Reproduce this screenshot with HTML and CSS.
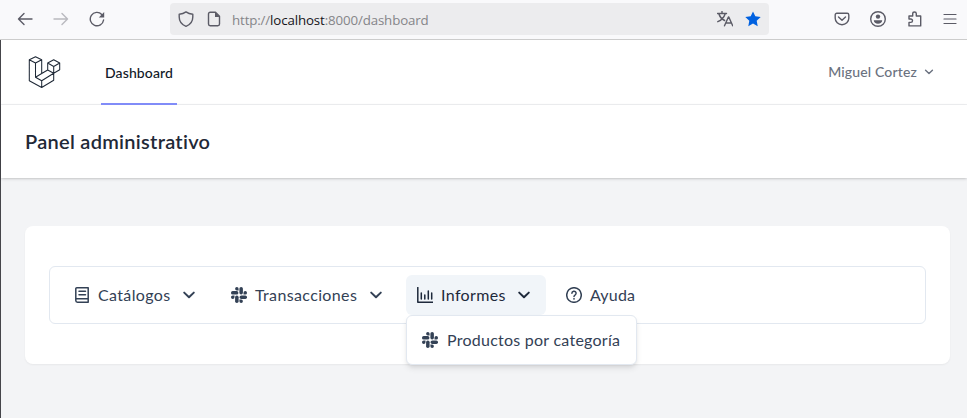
FILE: index.html
```html
<!DOCTYPE html>
<html lang="es">
<head>
<meta charset="utf-8">
<title>Panel administrativo</title>
<link rel="stylesheet" href="styles.css">
</head>
<body>
<svg class="defs" aria-hidden="true">
  <symbol id="slack" viewBox="0 0 16 16">
    <rect x="0" y="4.100" width="7.400" height="3.500" rx="1.700"/>
    <rect x="8.400" y="0" width="3.500" height="7.400" rx="1.700"/>
    <rect x="8.600" y="8.400" width="7.400" height="3.500" rx="1.700"/>
    <rect x="4.100" y="8.600" width="3.500" height="7.400" rx="1.700"/>
    <path d="M7.600 3.500H5.900A1.750 1.750 0 1 1 7.600 1.700zM12.500 7.600V5.900A1.750 1.750 0 1 1 14.300 7.600zM8.400 12.500h1.700a1.750 1.750 0 1 1-1.700 1.800zM3.500 8.400v1.700A1.750 1.750 0 1 1 1.700 8.400z"/>
  </symbol>
  <symbol id="chevron" viewBox="0 0 14 14">
    <path d="M2.200 4.600 7 9.200l4.800-4.600" fill="none" stroke="currentColor" stroke-width="2" stroke-linecap="round" stroke-linejoin="round"/>
  </symbol>
</svg>
<div class="toolbar">
  <div class="controls">
    <svg class="ico" viewBox="0 0 16 16"><path d="M15 8H1.500M7 2.600 1.500 8 7 13.400"/></svg>
    <svg class="ico disabled" viewBox="0 0 16 16"><path d="M1 8h13.500M9 2.600 14.500 8 9 13.400"/></svg>
    <svg class="ico" viewBox="0 0 16 16"><path d="M14.600 9A6.700 6.700 0 1 1 12.800 3.400"/><path class="solid" d="M15.200 1v5.400H9.800z"/></svg>
  </div>
  <div class="address">
    <svg class="ico" viewBox="0 0 16 16"><path d="M8 .9C6 2.400 3.700 3.100 1.200 3.200V6c0 4.500 2.700 7.700 6.800 9.300 4.100-1.600 6.800-4.800 6.800-9.300V3.200C12.300 3.100 10 2.400 8 .9z"/></svg>
    <svg class="ico page" viewBox="0 0 16 16"><path d="M9.500 1.200H4.200A1.700 1.700 0 0 0 2.500 2.900v10.200a1.700 1.700 0 0 0 1.700 1.700h7.600a1.700 1.700 0 0 0 1.700-1.700V5.200z"/><path class="solid" d="M9 1v5h4.500z"/></svg>
    <span class="url">http://<b>localhost</b>:8000/dashboard</span>
    <svg class="ico translate" viewBox="0 0 16 16"><path d="M.5 2.500h9M5 .5v2M2 3.200c1 3 3 5 5.600 6.300M8 3.200C7 6.400 4.500 9 .8 10.700"/><path d="M7.500 14.800 11.400 6h.4l3.900 8.800M9 12h5.300"/></svg>
    <svg class="star" viewBox="0 0 16 16"><path d="m8 .4 2.300 4.900 5.400.7-4 3.700 1 5.500L8 12.600l-4.700 2.600 1-5.500-4-3.700 5.400-.7z"/></svg>
  </div>
  <div class="actions">
    <svg class="ico" viewBox="0 0 16 16"><path d="M2.800 2.300h10.400a1.600 1.600 0 0 1 1.600 1.600v3.300a6.800 6.500 0 0 1-13.600 0V3.900a1.600 1.600 0 0 1 1.600-1.600zM4.500 6 8 9.300 11.500 6"/></svg>
    <svg class="ico" viewBox="0 0 16 16"><circle cx="8" cy="8" r="7.300"/><circle class="solid" cx="8" cy="5.600" r="2.200"/><path class="solid" d="M3.800 9.300h8.400c0 2.200-1.800 3.500-4.200 3.500s-4.200-1.300-4.200-3.500z"/></svg>
    <svg class="ico ext" viewBox="0 0 16 16"><path d="M2 8V5h3.700V2.800a1.800 1.800 0 0 1 3.600 0V5h4.400v9.900H2v-3.500h1.800a1.700 1.700 0 0 0 0-3.400z"/></svg>
    <svg class="ico menu" viewBox="0 0 16 16"><path d="M2 3.500h12M2 8h12M2 12.500h12"/></svg>
  </div>
</div>
<div class="viewport">
  <nav class="topnav">
    <svg class="logo" viewBox="0 0 33 33"><path d="M1.300 3.800 7.500.8l6.200 3v13.700l6-3.500V7l6-3.200 6 3.200v6.800l-6 3.500v7l-12 7.200L1.300 24.700zM1.300 3.800l6.200 3.200 6.200-3.200M7.500 7v14.200l6.200-3.700M7.500 21.200l6.200 3.600 12-7.500M13.700 24.800v6.700M19.700 14l6 3.300M19.700 7l6 3.500 6-3.500M25.700 10.500v6.800"/></svg>
    <a class="tab"><span>Dashboard</span></a>
    <div class="user"><span>Miguel Cortez</span><svg viewBox="0 0 14 14"><use href="#chevron"/></svg></div>
  </nav>
  <header class="heading"><h1>Panel administrativo</h1></header>
  <main>
    <section class="card">
      <div class="menubar">
        <div class="item catalogs">
          <svg class="mi" viewBox="0 0 16 16"><path class="line" d="M2.800.8h11.400v14.400H3.500A1.700 1.700 0 0 1 1.800 13.500V1.800a1 1 0 0 1 1-1zM2 11.700h12.200M5 4.300h6.500M5 7.700h6.500"/></svg>
          <span>Catálogos</span><svg class="chev"><use href="#chevron"/></svg>
        </div>
        <div class="item transactions">
          <svg class="mi"><use href="#slack"/></svg>
          <span>Transacciones</span><svg class="chev"><use href="#chevron"/></svg>
        </div>
        <div class="item reports active">
          <svg class="mi" viewBox="0 0 16 16"><path class="line" d="M.8.500v14.700h15.200M4.300 6v6M7.800 8v4M11.300 4v8M14.700 6v6"/></svg>
          <span>Informes</span><svg class="chev"><use href="#chevron"/></svg>
          <div class="submenu">
            <svg class="mi"><use href="#slack"/></svg><span>Productos por categoría</span>
          </div>
        </div>
        <div class="item help">
          <svg class="mi" viewBox="0 0 16 16"><circle class="line" cx="8" cy="8" r="7.300"/><path class="line" d="M5.900 6.300A2.100 2.100 0 1 1 9 8.100c-.7.400-1 .7-1 1.500"/><circle cx="8" cy="11.800" r=".9"/></svg>
          <span>Ayuda</span>
        </div>
      </div>
    </section>
  </main>
</div>
</body>
</html>
```
FILE: styles.css
```css
* { box-sizing: border-box; }
body { margin: 0; height: 418px; overflow: hidden; background: #f3f4f6; font-family: Lato, "Liberation Sans", sans-serif; }
svg { display: block; flex: none; }
.defs { display: none; }
.toolbar { display: flex; align-items: center; height: 40px; padding: 0 9px 2px 17px; background: #f9f9fb; border-bottom: 1px solid #ccc; }
.controls { display: flex; gap: 20px; width: 153px; }
.ico { width: 16px; height: 16px; fill: none; stroke: #5b5b66; stroke-width: 1.4; stroke-linecap: round; stroke-linejoin: round; }
.ico .solid { fill: #5b5b66; stroke: none; }
.menu { stroke-width: 1.2; }
.disabled { opacity: .4; }
.address { display: flex; align-items: center; width: 599px; height: 32px; padding: 0 8px; border-radius: 4px; background: #ececee; }
.page { margin-left: 12px; }
.url { flex: 1; margin-left: 10px; padding-top: 2px; color: #858589; font: 13.3px "Open Sans", sans-serif; letter-spacing: -.13px; }
.url b { color: #15141a; font-weight: 400; }
.translate { margin-right: 12px; }
.star { width: 16px; height: 16px; fill: #0061e0; }
.actions { display: flex; gap: 20px; margin-left: auto; }
.ext { margin: 0 -1px 0 1px; }
.viewport { height: 378px; border-left: 1px solid #45454a; }
.topnav { display: flex; height: 65px; padding: 0 33px 0 27px; background: #fff; border-bottom: 1px solid #f0f1f3; }
.logo { width: 33px; height: 33px; margin-top: 16px; fill: none; stroke: #1f2937; stroke-width: 1.05; stroke-linejoin: round; }
.tab { display: flex; align-items: center; justify-content: center; width: 76px; height: 65px; margin-left: 40px; padding-top: 2px; border-bottom: 2px solid #818cf8; color: #111827; font-size: 14px; font-weight: 500; letter-spacing: .12px; }
.user { display: flex; align-items: center; gap: 7px; margin-left: auto; color: #6b7280; font-size: 14px; font-weight: 500; letter-spacing: .15px; }
.user span { margin-top: -2px; }
.user svg { width: 10px; height: 10px; }
.heading { height: 73px; padding: 21px 24px; background: #fff; box-shadow: 0 1px 3px rgba(0,0,0,.15), 0 1px 2px -1px rgba(0,0,0,.15); }
h1 { margin: 0; color: #1f2937; font-size: 20px; font-weight: 600; line-height: 30px; letter-spacing: .28px; }
main { padding: 48px 17px 0 24px; }
.card { height: 138px; padding: 40px 24px; border-radius: 8px; background: #fff; box-shadow: 0 1px 2px rgba(0,0,0,.05); }
.menubar { display: flex; align-items: center; gap: 8px; height: 58px; padding: 8px; border: 1px solid #e2e8f0; border-radius: 6px; color: #334155; font-size: 16px; letter-spacing: .36px; }
.item { position: relative; display: flex; align-items: center; height: 40px; padding-left: 11px; border-radius: 6px; white-space: nowrap; }
.item > span { margin-left: 8px; padding-bottom: 2px; }
.mi { width: 16px; height: 16px; fill: currentColor; }
.line { fill: none; stroke: currentColor; stroke-width: 1.5; stroke-linecap: round; stroke-linejoin: round; }
.chev { width: 14px; height: 14px; margin-left: auto; }
.catalogs { width: 149px; padding-left: 16px; padding-right: 11px; }
.transactions { width: 183px; padding-left: 16px; padding-right: 15px; }
.reports { width: 140px; padding-right: 15px; }
.active { background: #f1f5f9; color: #1e293b; }
.help { padding-left: 12px; letter-spacing: .2px; }
.submenu { position: absolute; top: 40px; left: 0; display: flex; align-items: center; width: 231px; height: 50px; padding-left: 15px; border: 1px solid #e2e8f0; border-radius: 6px; background: #fff; color: #334155; box-shadow: 0 4px 6px -1px rgba(0,0,0,.1), 0 2px 4px -2px rgba(0,0,0,.1); letter-spacing: .25px; }
.submenu span { margin-left: 9px; padding-bottom: 2px; }
```
